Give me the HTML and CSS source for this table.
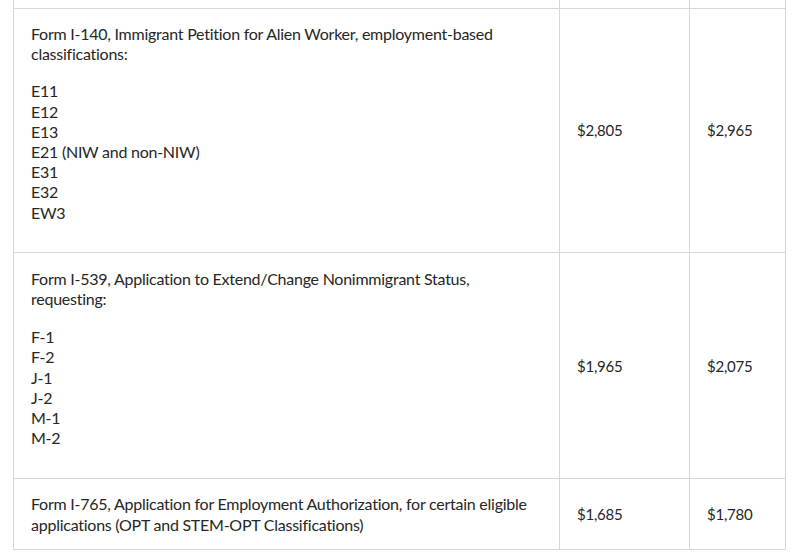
FILE: index.html
```html
<!DOCTYPE html>
<html lang="en">
<head>
<meta charset="utf-8">
<title>Fee table</title>
<link rel="stylesheet" href="styles.css">
</head>
<body>
<div class="wrap">
<table class="fees">
  <colgroup>
    <col class="c-form">
    <col class="c-fee">
    <col class="c-fee2">
  </colgroup>
  <tbody>
    <tr class="prev">
      <td></td><td></td><td></td>
    </tr>
    <tr class="r1">
      <td class="form">
        <p class="lead">Form I-140, Immigrant Petition for Alien Worker, employment-based classifications:</p>
        <p class="list">E11<br>E12<br>E13<br>E21 (NIW and non-NIW)<br>E31<br>E32<br>EW3</p>
      </td>
      <td class="fee">$2,805</td>
      <td class="fee">$2,965</td>
    </tr>
    <tr class="r2">
      <td class="form">
        <p class="lead">Form I-539, Application to Extend/Change Nonimmigrant Status, requesting:</p>
        <p class="list">F-1<br>F-2<br>J-1<br>J-2<br>M-1<br>M-2</p>
      </td>
      <td class="fee">$1,965</td>
      <td class="fee">$2,075</td>
    </tr>
    <tr class="r3">
      <td class="form">
        <p class="single">Form I-765, Application for Employment Authorization, for certain eligible applications (OPT and STEM-OPT Classifications)</p>
      </td>
      <td class="fee">$1,685</td>
      <td class="fee">$1,780</td>
    </tr>
  </tbody>
</table>
</div>
</body>
</html>
```
FILE: styles.css
```css
html, body {
  margin: 0;
  padding: 0;
  background: #ffffff;
}
.wrap {
  padding-left: 13px;
}
.fees {
  border-collapse: collapse;
  width: 772px;
  table-layout: fixed;
  font-family: Lato, "Liberation Sans", sans-serif;
  font-size: 16px;
  line-height: 20.2px;
  letter-spacing: -0.25px;
  color: #262626;
}
.c-form { width: 546px; }
.c-fee { width: 130px; }
.c-fee2 { width: 96px; }
.fees td {
  border: 1px solid #d6d6d6;
  vertical-align: middle;
  padding: 15px 17px;
}
.fees tr.prev td {
  border-top: 0;
  height: 8px;
  padding: 0;
}
.fees p {
  margin: 0;
}
.fees tr.r1 td.form {
  padding: 15px 17px 29px 17px;
}
.fees tr.r1 p.lead {
  margin-bottom: 17px;
}
.fees tr.r2 td.form {
  padding: 16px 17px 30px 17px;
}
.fees tr.r2 p.lead {
  margin-bottom: 18px;
}
.fees tr.r3 td.form {
  padding: 15px 17px 14px 17px;
}
.fee {
  font-size: 15px;
  padding-left: 17px;
}
```
